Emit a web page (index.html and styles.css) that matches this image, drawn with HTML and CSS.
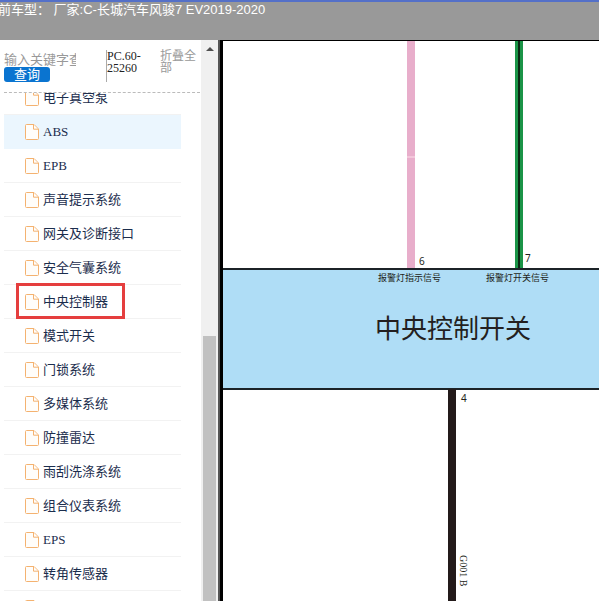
FILE: index.html
```html
<!DOCTYPE html>
<html lang="zh-CN">
<head>
	<meta charset="UTF-8">
	<title>电路图</title>
	<link rel="stylesheet" href="styles.css">
</head>
<body>
	<svg class="defs" aria-hidden="true">
		<symbol id="file" viewBox="0 0 14 16">
			<path d="M1.5 .5H9L13.5 5v9.5q0 1-1 1H1.5q-1 0-1-1v-13q0-1 1-1z"/>
			<path d="M8.5 .8V5.2H13"/>
		</symbol>
	</svg>

	<header class="header">
		<div class="car">前车型： 厂家:C-长城汽车风骏7 EV2019-2020</div>
	</header>

	<div class="wrap">
		<aside class="sidebar">
			<div class="menu">
				<form class="search-bar">
					<div class="search-box">
						<input class="search" type="text" name="search" placeholder="输入关键字查询" aria-label="输入关键字查询">
						<button class="button" type="button">查询</button>
					</div>
					<div class="code">PC.60-<br>25260</div>
					<a class="fold" href="#">折叠全部</a>
				</form>
				<nav class="tree">
					<ul class="tree-list">
						<li><a href="#"><svg class="icon"><use href="#file"/></svg>电子真空泵</a></li>
						<li class="active"><a href="#"><svg class="icon"><use href="#file"/></svg>ABS</a></li>
						<li><a href="#"><svg class="icon"><use href="#file"/></svg>EPB</a></li>
						<li><a href="#"><svg class="icon"><use href="#file"/></svg>声音提示系统</a></li>
						<li><a href="#"><svg class="icon"><use href="#file"/></svg>网关及诊断接口</a></li>
						<li><a href="#"><svg class="icon"><use href="#file"/></svg>安全气囊系统</a></li>
						<li class="marked"><a href="#"><svg class="icon"><use href="#file"/></svg>中央控制器</a></li>
						<li><a href="#"><svg class="icon"><use href="#file"/></svg>模式开关</a></li>
						<li><a href="#"><svg class="icon"><use href="#file"/></svg>门锁系统</a></li>
						<li><a href="#"><svg class="icon"><use href="#file"/></svg>多媒体系统</a></li>
						<li><a href="#"><svg class="icon"><use href="#file"/></svg>防撞雷达</a></li>
						<li><a href="#"><svg class="icon"><use href="#file"/></svg>雨刮洗涤系统</a></li>
						<li><a href="#"><svg class="icon"><use href="#file"/></svg>组合仪表系统</a></li>
						<li><a href="#"><svg class="icon"><use href="#file"/></svg>EPS</a></li>
						<li><a href="#"><svg class="icon"><use href="#file"/></svg>转角传感器</a></li>
						<li><a href="#" aria-label="更多"><svg class="icon"><use href="#file"/></svg></a></li>
					</ul>
				</nav>
			</div>
			<div class="scroll">
				<svg class="scroll-up" viewBox="0 0 8 4"><path d="M0 4L4 0L8 4z"/></svg>
				<div class="scroll-thumb"></div>
			</div>
		</aside>

		<main class="diagram">
			<svg class="sheet">
				<!-- 6: 粉色线 -->
				<rect class="pink" x="184" y="0" width="8" height="228"/>
				<rect class="joint" x="184" y="115" width="8" height="2"/>
				<!-- 7: 绿黑线 -->
				<rect class="green" x="292" y="0" width="8" height="228"/>
				<rect class="black" x="295" y="0" width="2" height="228"/>

				<rect class="module" x="0" y="228" width="100%" height="120"/>
				<rect class="edge" x="0" y="227" width="100%" height="2"/>
				<rect class="edge" x="0" y="347" width="100%" height="2"/>

				<!-- 4: 搭铁线 -->
				<rect class="ground" x="225" y="348" width="8" height="100%"/>

				<text class="pin" x="196" y="224">6</text>
				<text class="pin" x="302" y="221">7</text>
				<text class="pin" x="238" y="361">4</text>
				<text class="signal" x="155" y="240">报警灯指示信号</text>
				<text class="signal" x="263" y="240">报警灯开关信号</text>
				<text class="name" x="152" y="297">中央控制开关</text>
				<text class="wire" transform="translate(237 514) rotate(90)">G001 B</text>
			</svg>
		</main>
	</div>
</body>
</html>
```
FILE: styles.css
```css
*,
*::after {
	box-sizing: border-box;
}
body {
	display: flex;
	flex-direction: column;
	height: 100vh;
	margin: 0;
	overflow: hidden;
	background-color: #fff;
	font-family: "Liberation Serif", "Noto Sans CJK SC", serif;
	font-size: 13px;
}
a {
	color: inherit;
	text-decoration: none;
}
.defs {
	display: none;
}

.header {
	flex: none;
	height: 40px;
	border-top: 2px solid #5470c8;
	background-color: #999;
	color: #fff;
	font-family: "Liberation Sans", "Noto Sans CJK SC", sans-serif;
	line-height: 16px;
}
.car {
	margin-left: -2px;
	white-space: nowrap;
}

.wrap {
	display: flex;
	flex: 1;
	min-height: 0;
}
.sidebar {
	display: flex;
	flex: none;
	width: 223px;
	border-right: 3px solid #000;
	box-shadow: inset -2px 0 #555;
}
.menu {
	display: flex;
	flex: 1;
	flex-direction: column;
	min-width: 0;
	padding-left: 4px;
}

.search-bar {
	display: flex;
	flex: none;
	height: 53px;
	margin: 0 1px 0 0;
	padding-top: 10px;
	border-bottom: 1px dashed #bbb;
	font-size: 12px;
	line-height: 12px;
}
.search-box {
	display: flex;
	flex-direction: column;
	width: 102px;
}
.search {
	width: 72px;
	height: 17px;
	padding: 2px 0 0;
	border: 0;
	outline: 0;
	background: none;
	font-family: inherit;
	font-size: 13px;
}
.search::placeholder {
	color: #999;
}
.button {
	width: 46px;
	height: 15px;
	padding: 0;
	border: 0;
	border-radius: 3px;
	background-color: #0a74d0;
	color: #fff;
	font-family: inherit;
	font-size: 13px;
	line-height: 15px;
}
.code {
	width: 54px;
	height: 32px;
	border-left: 1px solid #aaa;
	color: #222;
}
.fold {
	width: 36px;
	color: #999;
}

.tree {
	flex: 1;
	min-height: 0;
	overflow: hidden;
}
/* 列表已向下滚动 */
.tree-list {
	margin: -12px 20px 0 0;
	padding: 0;
	list-style: none;
}
.tree-list li {
	position: relative;
	height: 34px;
	border-bottom: 1px solid #f2f2f2;
}
.tree-list a {
	display: flex;
	align-items: center;
	gap: 4px;
	height: 34px;
	padding-left: 21px;
	color: #1b2d4d;
	line-height: 16px;
}
.tree-list .active {
	border-color: #ebf6fe;
	background-color: #ebf6fe;
}
.tree-list .marked::after {
	content: "";
	position: absolute;
	top: -2px;
	left: 12px;
	width: 109px;
	height: 36px;
	border: 3px solid #e53e3e;
}
.icon {
	width: 14px;
	height: 16px;
	fill: #fffdfa;
	stroke: #f4b270;
}

.scroll {
	display: flex;
	flex-direction: column;
	align-items: center;
	width: 17px;
	margin-right: 2px;
	padding-top: 7px;
	background-color: #f0f0f0;
}
.scroll-up {
	width: 8px;
	height: 4px;
	fill: #505050;
}
.scroll-thumb {
	flex: 1;
	width: 13px;
	margin-top: 285px;
	background-color: #c1c1c1;
}

.diagram {
	flex: 1;
	min-width: 0;
	border-top: 1px solid #000;
}
.sheet {
	display: block;
	width: 100%;
	height: 100%;
	fill: #231f20;
}
.pink {
	fill: #e8aecb;
}
.joint {
	fill: #f3c6da;
}
.green {
	fill: #1b9447;
}
.black {
	fill: #0b2814;
}
.module {
	fill: #afddf6;
}
.edge {
	fill: #1c2328;
}
.ground {
	fill: #231a1a;
}
.pin {
	font-family: "Noto Sans", sans-serif;
	font-size: 10px;
}
.signal {
	font-family: "Noto Sans CJK SC", sans-serif;
	font-size: 9px;
}
.name {
	font-family: "Noto Sans CJK SC", sans-serif;
	font-size: 26px;
}
.wire {
	font-size: 10px;
}
```
